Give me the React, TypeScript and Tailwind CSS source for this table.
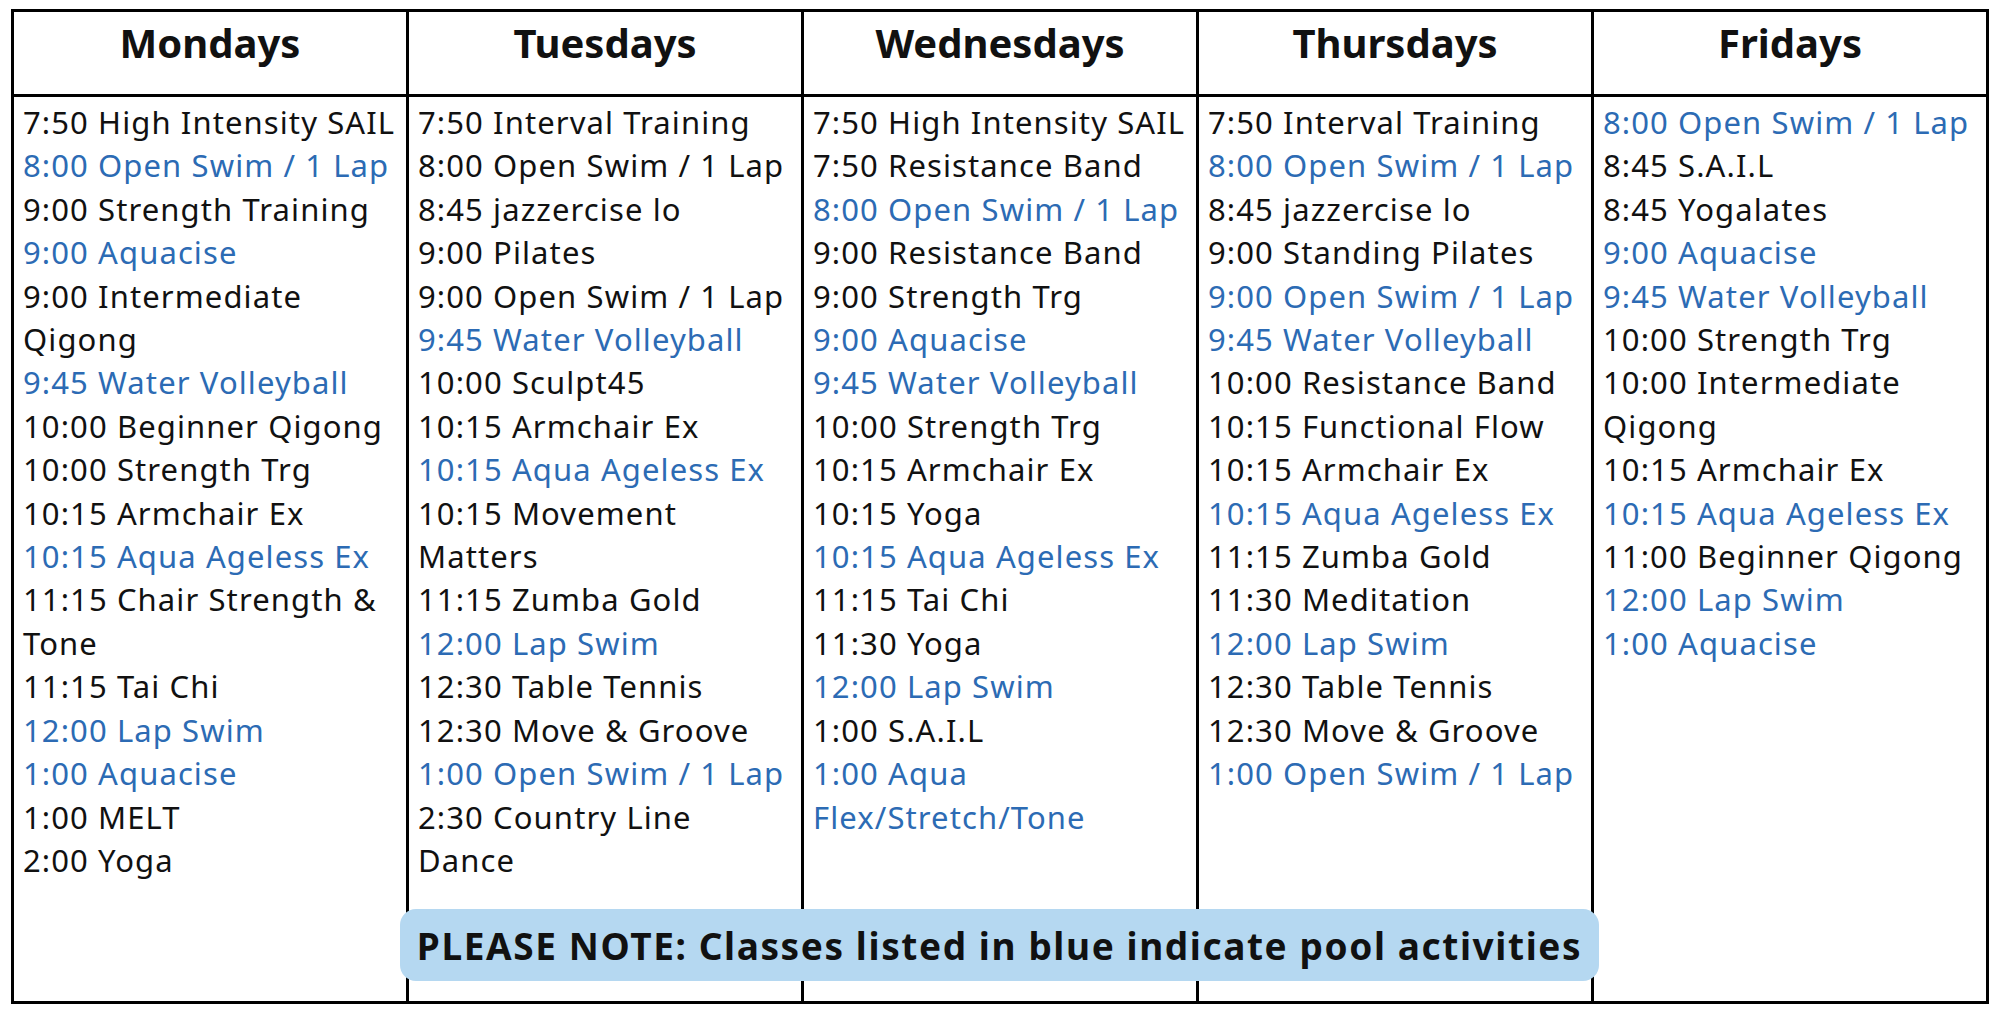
type Item = { text: string; pool?: boolean };

const days: { name: string; items: Item[] }[] = [
  {
    name: 'Mondays',
    items: [
      { text: '7:50 High Intensity SAIL' },
      { text: '8:00 Open Swim / 1 Lap', pool: true },
      { text: '9:00 Strength Training' },
      { text: '9:00 Aquacise', pool: true },
      { text: '9:00 Intermediate\nQigong' },
      { text: '9:45 Water Volleyball', pool: true },
      { text: '10:00 Beginner Qigong' },
      { text: '10:00 Strength Trg' },
      { text: '10:15 Armchair Ex' },
      { text: '10:15 Aqua Ageless Ex', pool: true },
      { text: '11:15 Chair Strength &\nTone' },
      { text: '11:15 Tai Chi' },
      { text: '12:00 Lap Swim', pool: true },
      { text: '1:00 Aquacise', pool: true },
      { text: '1:00 MELT' },
      { text: '2:00 Yoga' },
    ],
  },
  {
    name: 'Tuesdays',
    items: [
      { text: '7:50 Interval Training' },
      { text: '8:00 Open Swim / 1 Lap' },
      { text: '8:45 jazzercise lo' },
      { text: '9:00 Pilates' },
      { text: '9:00 Open Swim / 1 Lap' },
      { text: '9:45 Water Volleyball', pool: true },
      { text: '10:00 Sculpt45' },
      { text: '10:15 Armchair Ex' },
      { text: '10:15 Aqua Ageless Ex', pool: true },
      { text: '10:15 Movement\nMatters' },
      { text: '11:15 Zumba Gold' },
      { text: '12:00 Lap Swim', pool: true },
      { text: '12:30 Table Tennis' },
      { text: '12:30 Move & Groove' },
      { text: '1:00 Open Swim / 1 Lap', pool: true },
      { text: '2:30 Country Line\nDance' },
    ],
  },
  {
    name: 'Wednesdays',
    items: [
      { text: '7:50 High Intensity SAIL' },
      { text: '7:50 Resistance Band' },
      { text: '8:00 Open Swim / 1 Lap', pool: true },
      { text: '9:00 Resistance Band' },
      { text: '9:00 Strength Trg' },
      { text: '9:00 Aquacise', pool: true },
      { text: '9:45 Water Volleyball', pool: true },
      { text: '10:00 Strength Trg' },
      { text: '10:15 Armchair Ex' },
      { text: '10:15 Yoga' },
      { text: '10:15 Aqua Ageless Ex', pool: true },
      { text: '11:15 Tai Chi' },
      { text: '11:30 Yoga' },
      { text: '12:00 Lap Swim', pool: true },
      { text: '1:00 S.A.I.L' },
      { text: '1:00 Aqua\nFlex/Stretch/Tone', pool: true },
    ],
  },
  {
    name: 'Thursdays',
    items: [
      { text: '7:50 Interval Training' },
      { text: '8:00 Open Swim / 1 Lap', pool: true },
      { text: '8:45 jazzercise lo' },
      { text: '9:00 Standing Pilates' },
      { text: '9:00 Open Swim / 1 Lap', pool: true },
      { text: '9:45 Water Volleyball', pool: true },
      { text: '10:00 Resistance Band' },
      { text: '10:15 Functional Flow' },
      { text: '10:15 Armchair Ex' },
      { text: '10:15 Aqua Ageless Ex', pool: true },
      { text: '11:15 Zumba Gold' },
      { text: '11:30 Meditation' },
      { text: '12:00 Lap Swim', pool: true },
      { text: '12:30 Table Tennis' },
      { text: '12:30 Move & Groove' },
      { text: '1:00 Open Swim / 1 Lap', pool: true },
    ],
  },
  {
    name: 'Fridays',
    items: [
      { text: '8:00 Open Swim / 1 Lap', pool: true },
      { text: '8:45 S.A.I.L' },
      { text: '8:45 Yogalates' },
      { text: '9:00 Aquacise', pool: true },
      { text: '9:45 Water Volleyball', pool: true },
      { text: '10:00 Strength Trg' },
      { text: '10:00 Intermediate\nQigong' },
      { text: '10:15 Armchair Ex' },
      { text: '10:15 Aqua Ageless Ex', pool: true },
      { text: '11:00 Beginner Qigong' },
      { text: '12:00 Lap Swim', pool: true },
      { text: '1:00 Aquacise', pool: true },
    ],
  },
];

export default function App() {
  return (
    <div className="w-[2000px] h-[1014px] bg-white pl-[11px] pt-[9px] font-['Noto_Sans',sans-serif] text-[#111]">
      <div className="relative w-[1978px] h-[995px] border-[3px] border-black flex flex-col">
        {/* header row */}
        <div className="flex h-[85px] border-b-[3px] border-black">
          {days.map((day, i) => (
            <div
              key={day.name}
              className={`flex-1 text-center pt-[4px] text-[40px] font-bold leading-[53px] ${i > 0 ? 'border-l-[3px] border-black' : ''}`}
            >
              {day.name}
            </div>
          ))}
        </div>

        {/* class lists */}
        <div className="flex flex-1">
          {days.map((day, i) => (
            <div
              key={day.name}
              className={`flex-1 pl-[9px] pt-[4px] ${i > 0 ? 'border-l-[3px] border-black' : ''}`}
            >
              {day.items.map((item, j) => (
                <div
                  key={j}
                  className={`whitespace-pre text-[31px] leading-[43.4px] tracking-[1.1px] ${item.pool ? 'text-[#2c6bb4]' : 'text-[#111]'}`}
                >
                  {item.text}
                </div>
              ))}
            </div>
          ))}
        </div>

        {/* note banner */}
        <div className="absolute left-[386px] top-[897px] w-[1199px] h-[72px] rounded-[16px] bg-[#b5d8f1] flex items-center justify-center">
          <span className="text-[37px] font-bold tracking-[1.6px] text-[#111] leading-none">
            PLEASE NOTE: Classes listed in blue indicate pool activities
          </span>
        </div>
      </div>
    </div>
  );
}
